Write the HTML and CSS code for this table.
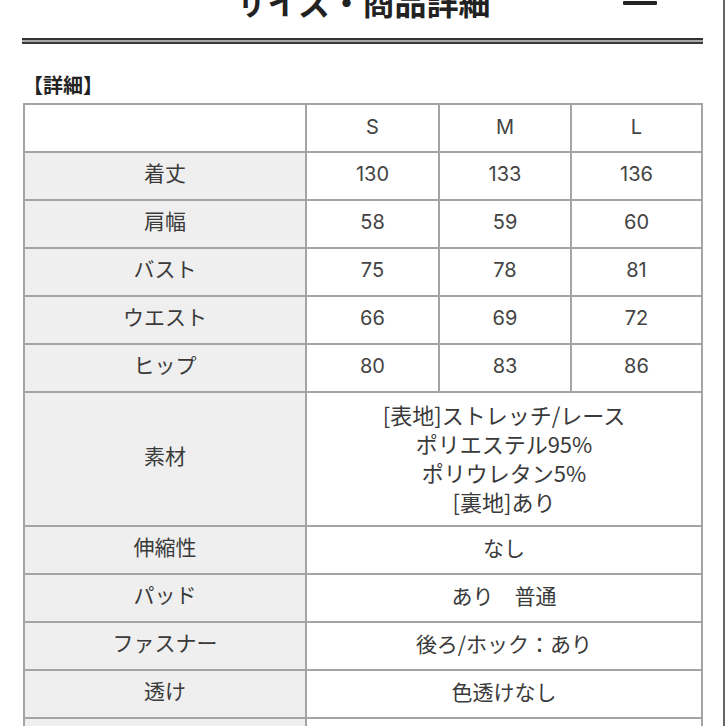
FILE: index.html
```html
<!DOCTYPE html>
<html lang="ja">
<head>
<meta charset="utf-8">
<title>サイズ・商品詳細</title>
<link rel="stylesheet" href="styles.css">
</head>
<body>
<div class="page">
  <header class="top">
    <div></div>
    <h1 class="title">サイズ・商品詳細</h1>
    <div class="menu"><span class="minus"></span></div>
  </header>
  <div class="divider"></div>
  <h2 class="section">【詳細】</h2>
  <div class="table">
    <div class="cell blank"></div>
    <div class="cell num head">S</div>
    <div class="cell num head">M</div>
    <div class="cell num head">L</div>

    <div class="cell label">着丈</div>
    <div class="cell num">130</div>
    <div class="cell num">133</div>
    <div class="cell num">136</div>

    <div class="cell label">肩幅</div>
    <div class="cell num">58</div>
    <div class="cell num">59</div>
    <div class="cell num">60</div>

    <div class="cell label">バスト</div>
    <div class="cell num">75</div>
    <div class="cell num">78</div>
    <div class="cell num">81</div>

    <div class="cell label">ウエスト</div>
    <div class="cell num">66</div>
    <div class="cell num">69</div>
    <div class="cell num">72</div>

    <div class="cell label">ヒップ</div>
    <div class="cell num">80</div>
    <div class="cell num">83</div>
    <div class="cell num">86</div>

    <div class="cell label">素材</div>
    <div class="cell value span multi">[表地]ストレッチ/レース<br>ポリエステル95%<br>ポリウレタン5%<br>[裏地]あり</div>

    <div class="cell label">伸縮性</div>
    <div class="cell value span">なし</div>

    <div class="cell label">パッド</div>
    <div class="cell value span">あり　普通</div>

    <div class="cell label">ファスナー</div>
    <div class="cell value span">後ろ/ホック：あり</div>

    <div class="cell label">透け</div>
    <div class="cell value span">色透けなし</div>

    <div class="cell label"></div>
    <div class="cell value span"></div>
  </div>
</div>
<div class="edge"></div>
</body>
</html>
```

FILE: styles.css
```css
html, body {
  margin: 0;
  padding: 0;
  background: #ffffff;
  overflow: hidden;
}
body {
  width: 726px;
  height: 726px;
  position: relative;
  font-family: "Noto Sans CJK JP", "Noto Sans", sans-serif;
  color: #333;
}
.page {
  width: 726px;
}
.top {
  display: grid;
  grid-template-columns: 1fr auto 1fr;
  height: 38px;
  align-items: start;
}
.title {
  margin: -15px 0 0 0;
  font-size: 32px;
  line-height: 32px;
  font-weight: 700;
  color: #222;
  white-space: nowrap;
}
.menu {
  display: flex;
  justify-content: flex-end;
  padding-right: 69px;
  padding-top: 1px;
}
.minus {
  display: block;
  width: 34px;
  height: 4px;
  background: #222;
  border-radius: 1px;
}
.divider {
  margin-left: 22px;
  width: 681px;
  height: 2px;
  border-top: 2px solid #333;
  border-bottom: 2px solid #3a3a3a;
  background: #a8a8a8;
}
.section {
  margin: 31px 0 0 23px;
  font-size: 20px;
  line-height: 20px;
  font-weight: 700;
  color: #222;
}
.table {
  margin: 8px 0 0 23px;
  width: 676px;
  padding: 2px;
  background: #a4a4a4;
  display: grid;
  grid-template-columns: 280px 131px 130px 129px;
  grid-template-rows: repeat(6, 46px) 132px repeat(5, 46px);
  gap: 2px;
}
.cell {
  display: flex;
  align-items: center;
  justify-content: center;
  background: #fff;
  font-size: 21px;
  line-height: 29px;
  color: #3a3a3a;
  padding-bottom: 6px;
  box-sizing: border-box;
}
.label {
  background: #efefef;
  padding-bottom: 7px;
}
.blank {
  background: #fff;
}
.num {
  font-family: "Inter", "Lato", sans-serif;
  font-size: 20px;
  font-weight: 400;
  color: #444;
  padding-bottom: 4px;
}
.num.head {
  padding-bottom: 2px;
}
.span {
  grid-column: 2 / 5;
}
.multi {
  flex-direction: column;
  text-align: center;
  font-size: 22px;
  line-height: 29px;
  padding-bottom: 2px;
}
.edge {
  position: absolute;
  top: 0;
  left: 723px;
  width: 2px;
  height: 726px;
  background: #666;
}
```
